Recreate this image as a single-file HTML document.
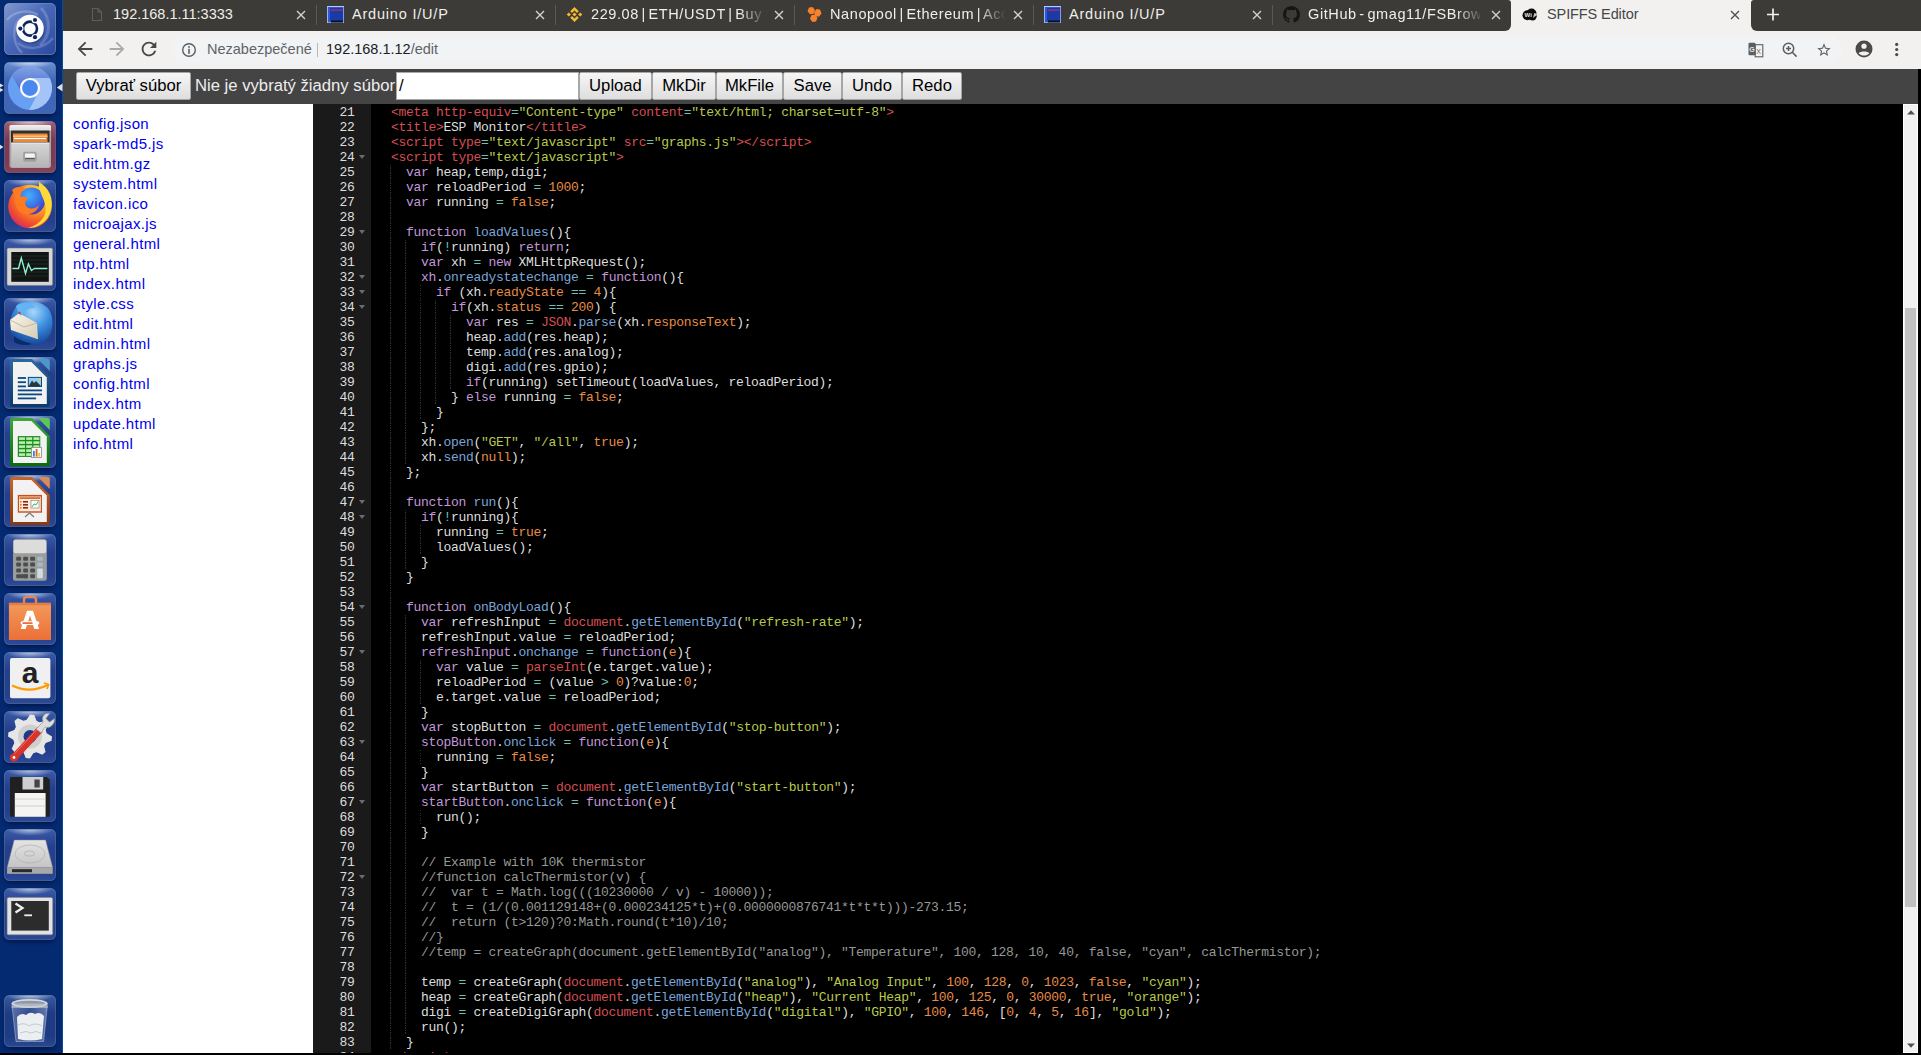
<!DOCTYPE html>
<html><head><meta charset="utf-8"><title>SPIFFS Editor</title>
<style>
html,body{margin:0;padding:0;width:1921px;height:1055px;overflow:hidden;background:#000;position:relative}
*{box-sizing:border-box}
div,svg{position:absolute;display:block}
.sans{font-family:"Liberation Sans",sans-serif}
#tabbar{left:0;top:0;width:1921px;height:31px;background:#3c3b37;}
.tab{top:0;height:31px;white-space:pre;font-family:"Liberation Sans",sans-serif;font-size:14.5px;color:#efeee9;line-height:29px}
.tsep{top:5px;width:1px;height:20px;background:#5a5955}
#toolbar{left:0;top:31px;width:1921px;height:38px;background:#f2f1f0;}
#omni{left:171px;top:36px;width:1671px;height:27px;border-radius:14px;background:#f1f3f4}
#hdr{left:63px;top:69px;width:1855px;height:35px;background:#444;font-family:"Liberation Sans",sans-serif;font-size:16.67px;}
#tree{left:63px;top:104px;width:250px;height:951px;background:#fff;font-family:"Liberation Sans",sans-serif;font-size:15px;}
.fi{left:10px;color:#0000ee;white-space:pre;line-height:20px;letter-spacing:0.4px}
#gutter{left:313px;top:104px;width:58px;height:951px;background:#1a1a1a;overflow:hidden;font-family:"Liberation Mono",monospace;font-size:13px;color:#dedede}
.gn{left:0;width:41.5px;text-align:right;line-height:15px;letter-spacing:-0.3px;white-space:pre}
.fw{left:46px;width:0;height:0;border-left:3.5px solid transparent;border-right:3.5px solid transparent;border-top:4px solid #6b6b6b}
#code{left:371px;top:104px;width:1547px;height:951px;background:#000;overflow:hidden;font-family:"Liberation Mono",monospace;font-size:13px;color:#dedede}
.ln{left:5px;line-height:15px;white-space:pre;letter-spacing:-0.3px}
.ln i{font-style:normal}
i.k{color:#c397d8} i.o{color:#70c0b1} i.n{color:#e78c45} i.s{color:#b9ca4a} i.f{color:#7aa6da} i.v{color:#d54e53} i.c{color:#969896}
.ig{width:1px;background:repeating-linear-gradient(to bottom,#2e2e2e 0,#2e2e2e 1.25px,transparent 1.25px,transparent 2.5px)}
#sb{left:1903px;top:104px;width:15px;height:949px;background:#f1f1f1;border:1px solid #fff}
#thumb{left:1px;top:203px;width:11px;height:599px;background:#c1c1c1}
#bottom{left:0;top:1053px;width:1921px;height:2px;background:#000;z-index:5}
.btn{top:3px;height:28px;border:1px solid #a6a6a6;border-radius:2px;background:linear-gradient(#f6f6f6,#dedede);color:#000;line-height:25px;text-align:center;white-space:pre}
#launcher{left:0;top:0;width:63px;height:1055px;background:#042a72;}
.tile{left:4px;width:52px;height:52px;border-radius:5px;overflow:hidden}
</style></head><body>
<div id="tabbar"></div>
<svg style="left:91px;top:7px" width="12" height="15" viewBox="0 0 12 15"><path d="M1.5 1.5H7L10.5 5V13.5H1.5Z M7 1.5V5H10.5" fill="none" stroke="#5f5e5a" stroke-width="1.1"/></svg>
<div class="tab" style="left:113px;letter-spacing:0">192.168.1.11:3333</div>
<svg style="left:296.0px;top:10px" width="10" height="10" viewBox="0 0 10 10"><path d="M1 1L9 9M9 1L1 9" stroke="#d3d2cd" stroke-width="1.35"/></svg>
<div class="tsep" style="left:316px"></div>
<svg style="left:327px;top:6px" width="17" height="17" viewBox="0 0 17 17"><rect x="0" y="0" width="17" height="17" fill="#b8c8f0"/><rect x="0.8" y="1" width="15.6" height="15.4" fill="#2a5ad8"/><rect x="3" y="2" width="13" height="13" fill="#1a3aa8"/><rect x="3.5" y="3.5" width="12" height="1.2" fill="#c03050"/><rect x="4" y="14.5" width="12" height="2" fill="#111"/></svg>
<div class="tab" style="left:352px;letter-spacing:0.8px">Arduino I/U/P</div>
<svg style="left:535.0px;top:10px" width="10" height="10" viewBox="0 0 10 10"><path d="M1 1L9 9M9 1L1 9" stroke="#d3d2cd" stroke-width="1.35"/></svg>
<div class="tsep" style="left:555px"></div>
<svg style="left:566px;top:6px" width="17" height="17" viewBox="0 0 17 17"><g fill="#f3ba2f"><path d="M8.5 1L12.8 5.3 11 7.1 8.5 4.6 6 7.1 4.2 5.3Z"/><path d="M8.5 16L12.8 11.7 11 9.9 8.5 12.4 6 9.9 4.2 11.7Z"/><rect x="7" y="7" width="3" height="3" transform="rotate(45 8.5 8.5)"/><rect x="1.3" y="7" width="3" height="3" transform="rotate(45 2.8 8.5)"/><rect x="12.7" y="7" width="3" height="3" transform="rotate(45 14.2 8.5)"/></g></svg>
<div class="tab" style="left:591px;letter-spacing:0.6px;word-spacing:-2px;width:176px;overflow:hidden;-webkit-mask-image:linear-gradient(to right,#000 148px,transparent 176px)">229.08 | ETH/USDT | Buy ETH</div>
<svg style="left:774.0px;top:10px" width="10" height="10" viewBox="0 0 10 10"><path d="M1 1L9 9M9 1L1 9" stroke="#d3d2cd" stroke-width="1.35"/></svg>
<div class="tsep" style="left:794px"></div>
<svg style="left:805px;top:6px" width="17" height="17" viewBox="0 0 17 17"><g fill="#f7822a"><path d="M4 1.5L7.5 1 10 4 8.5 7.8 5 8.3 2.5 5.3Z"/><path d="M11.5 3L15 3.5 16.5 7.5 14 10.8 10.5 10.3 9 6.5Z"/><path d="M6.5 9L10 8.6 12.5 11.8 11 15.5 7.5 16 5 12.8Z"/></g></svg>
<div class="tab" style="left:830px;letter-spacing:0.6px;word-spacing:-2px;width:176px;overflow:hidden;-webkit-mask-image:linear-gradient(to right,#000 148px,transparent 176px)">Nanopool | Ethereum | Account</div>
<svg style="left:1013.0px;top:10px" width="10" height="10" viewBox="0 0 10 10"><path d="M1 1L9 9M9 1L1 9" stroke="#d3d2cd" stroke-width="1.35"/></svg>
<div class="tsep" style="left:1033px"></div>
<svg style="left:1044px;top:6px" width="17" height="17" viewBox="0 0 17 17"><rect x="0" y="0" width="17" height="17" fill="#b8c8f0"/><rect x="0.8" y="1" width="15.6" height="15.4" fill="#2a5ad8"/><rect x="3" y="2" width="13" height="13" fill="#1a3aa8"/><rect x="3.5" y="3.5" width="12" height="1.2" fill="#c03050"/><rect x="4" y="14.5" width="12" height="2" fill="#111"/></svg>
<div class="tab" style="left:1069px;letter-spacing:0.8px">Arduino I/U/P</div>
<svg style="left:1252.0px;top:10px" width="10" height="10" viewBox="0 0 10 10"><path d="M1 1L9 9M9 1L1 9" stroke="#d3d2cd" stroke-width="1.35"/></svg>
<div class="tsep" style="left:1272px"></div>
<svg style="left:1283px;top:6px" width="17" height="17" viewBox="0 0 16 16"><path fill="#161616" d="M8 0C3.58 0 0 3.58 0 8c0 3.54 2.29 6.53 5.47 7.59.4.07.55-.17.55-.38 0-.19-.01-.82-.01-1.49-2.01.37-2.53-.49-2.69-.94-.09-.23-.48-.94-.82-1.13-.28-.15-.68-.52-.01-.53.63-.01 1.08.58 1.23.82.72 1.21 1.87.87 2.33.66.07-.52.28-.87.51-1.07-1.78-.2-3.64-.89-3.64-3.95 0-.87.31-1.59.82-2.15-.08-.2-.36-1.02.08-2.12 0 0 .67-.21 2.2.82.64-.18 1.32-.27 2-.27.68 0 1.36.09 2 .27 1.53-1.04 2.2-.82 2.2-.82.44 1.1.16 1.92.08 2.12.51.56.82 1.27.82 2.15 0 3.07-1.87 3.75-3.65 3.95.29.25.54.73.54 1.48 0 1.07-.01 1.93-.01 2.2 0 .21.15.46.55.38A8.013 8.013 0 0016 8c0-4.42-3.58-8-8-8z"/></svg>
<div class="tab" style="left:1308px;letter-spacing:0.6px;word-spacing:-2px;width:176px;overflow:hidden;-webkit-mask-image:linear-gradient(to right,#000 148px,transparent 176px)">GitHub - gmag11/FSBrowser</div>
<svg style="left:1491.0px;top:10px" width="10" height="10" viewBox="0 0 10 10"><path d="M1 1L9 9M9 1L1 9" stroke="#d3d2cd" stroke-width="1.35"/></svg>
<div style="left:1505px;top:0;width:252px;height:31px;background:#f2f1f0"></div>
<div style="left:1480px;top:0;width:31px;height:31px;background:#3c3b37;border-radius:0 3px 6px 0"></div>
<div style="left:1751px;top:0;width:40px;height:31px;background:#3c3b37;border-radius:3px 0 0 6px"></div>
<svg style="left:1491.0px;top:10px" width="10" height="10" viewBox="0 0 10 10"><path d="M1 1L9 9M9 1L1 9" stroke="#d3d2cd" stroke-width="1.35"/></svg>
<svg style="left:1522px;top:8px" width="17" height="13" viewBox="0 0 17 13"><circle cx="5.5" cy="7.2" r="5" fill="#0b0b0b"/><circle cx="9.5" cy="5.5" r="5" fill="#0b0b0b"/><circle cx="10.5" cy="8.2" r="4.2" fill="#0b0b0b"/><text x="2.6" y="8.8" font-family="Liberation Sans" font-weight="bold" font-size="6" fill="#e6e6e6">Wi</text><path d="M11 10L12.3 5 15.8 6.2Z" fill="#c8c8c8"/></svg>
<div class="tab" style="left:1547px;color:#464646;letter-spacing:-0.1px">SPIFFS Editor</div>
<svg style="left:1730.0px;top:10px" width="10" height="10" viewBox="0 0 10 10"><path d="M1 1L9 9M9 1L1 9" stroke="#505050" stroke-width="1.35"/></svg>
<svg style="left:1766px;top:8px" width="14" height="13" viewBox="0 0 14 13"><path d="M7 0.5V12.5M1 6.5H13" stroke="#f2f1ec" stroke-width="1.7"/></svg>
<div id="toolbar"></div>
<div id="omni"></div>
<svg style="left:74px;top:38px" width="22" height="22" viewBox="0 0 24 24"><path d="M20 11H7.83l5.59-5.59L12 4l-8 8 8 8 1.41-1.41L7.83 13H20v-2z" fill="#474747"/></svg>
<svg style="left:106px;top:38px" width="22" height="22" viewBox="0 0 24 24"><path d="M4 11h12.17l-5.59-5.59L12 4l8 8-8 8-1.41-1.41L16.17 13H4v-2z" fill="#a9a9a9"/></svg>
<svg style="left:138px;top:38px" width="22" height="22" viewBox="0 0 24 24"><path d="M17.65 6.35C16.2 4.9 14.21 4 12 4c-4.42 0-7.99 3.58-7.99 8s3.57 8 7.99 8c3.73 0 6.84-2.55 7.73-6h-2.08c-.82 2.33-3.04 4-5.65 4-3.31 0-6-2.69-6-6s2.69-6 6-6c1.66 0 3.14.69 4.22 1.78L13 11h7V4l-2.35 2.35z" fill="#474747"/></svg>
<svg style="left:181px;top:42px" width="16" height="16" viewBox="0 0 16 16"><circle cx="8" cy="8" r="6.3" fill="none" stroke="#5b5e62" stroke-width="1.4"/><rect x="7.2" y="6.8" width="1.6" height="5" fill="#5b5e62"/><rect x="7.2" y="4.2" width="1.6" height="1.6" fill="#5b5e62"/></svg>
<div class="sans" style="left:207px;top:40px;font-size:14.5px;color:#5f6368;white-space:pre;line-height:18px">Nezabezpečené</div>
<div style="left:317px;top:43px;width:1px;height:14px;background:#b5b7b9"></div>
<div class="sans" style="left:326px;top:40px;font-size:14.5px;color:#202124;white-space:pre;line-height:18px">192.168.1.12<span style="color:#5f6368">/edit</span></div>
<svg style="left:1748px;top:42px" width="16" height="16" viewBox="0 0 16 16"><rect x="0.5" y="0.8" width="7" height="12.4" rx="1" fill="#5b5e62"/><rect x="7.2" y="2.7" width="7.6" height="12.1" fill="none" stroke="#5b5e62" stroke-width="1.1"/><text x="1.2" y="9.6" font-family="Liberation Sans" font-size="7" font-weight="bold" fill="#e8e8e8">G</text><text x="8.3" y="11.6" font-family="Liberation Sans" font-size="7" fill="#5b5e62">X</text></svg>
<svg style="left:1781px;top:41px" width="17" height="17" viewBox="0 0 17 17"><circle cx="7.5" cy="7.5" r="5.2" fill="none" stroke="#5b5e62" stroke-width="1.5"/><path d="M11.3 11.3L15.6 15.6M7.5 5V10M5 7.5H10" stroke="#5b5e62" stroke-width="1.5"/></svg>
<svg style="left:1816px;top:42px" width="16" height="16" viewBox="0 0 24 24"><path d="M22 9.24l-7.19-.62L12 2 9.19 8.63 2 9.24l5.46 4.73L5.82 21 12 17.27 18.18 21l-1.63-7.03L22 9.24zM12 15.4l-3.76 2.27 1-4.28-3.32-2.88 4.38-.38L12 6.1l1.71 4.04 4.38.38-3.32 2.88 1 4.28L12 15.4z" fill="#5b5e62"/></svg>
<svg style="left:1855px;top:40px" width="18" height="18" viewBox="0 0 18 18"><circle cx="9" cy="9" r="8.5" fill="#4a4a4a"/><circle cx="9" cy="6.2" r="2.6" fill="#f2f1f0"/><path d="M3.6 13.2C5 11 13 11 14.4 13.2 13 14.9 11 15.6 9 15.6 7 15.6 5 14.9 3.6 13.2Z" fill="#f2f1f0"/></svg>
<svg style="left:1894px;top:42px" width="6" height="15" viewBox="0 0 6 15"><circle cx="2.7" cy="2.4" r="1.6" fill="#4a4a4a"/><circle cx="2.7" cy="7.5" r="1.6" fill="#4a4a4a"/><circle cx="2.7" cy="12.6" r="1.6" fill="#4a4a4a"/></svg>
<div id="hdr">
  <div class="btn" style="left:13px;width:115px">Vybrať súbor</div>
  <div style="left:132px;top:5px;color:#eee;white-space:pre;line-height:24px">Nie je vybratý žiadny súbor</div>
  <div style="left:333px;top:3px;width:183px;height:28px;background:#fff;border:1px solid #a9a9a9;color:#000;line-height:25px;padding-left:2px">/</div>
  <div class="btn" style="left:516px;width:73px">Upload</div>
  <div class="btn" style="left:589px;width:64px">MkDir</div>
  <div class="btn" style="left:653px;width:67px">MkFile</div>
  <div class="btn" style="left:720px;width:59px">Save</div>
  <div class="btn" style="left:779px;width:60px">Undo</div>
  <div class="btn" style="left:839px;width:60px">Redo</div>
</div>
<div id="tree"><div class="fi" style="top:10px">config.json</div><div class="fi" style="top:30px">spark-md5.js</div><div class="fi" style="top:50px">edit.htm.gz</div><div class="fi" style="top:70px">system.html</div><div class="fi" style="top:90px">favicon.ico</div><div class="fi" style="top:110px">microajax.js</div><div class="fi" style="top:130px">general.html</div><div class="fi" style="top:150px">ntp.html</div><div class="fi" style="top:170px">index.html</div><div class="fi" style="top:190px">style.css</div><div class="fi" style="top:210px">edit.html</div><div class="fi" style="top:230px">admin.html</div><div class="fi" style="top:250px">graphs.js</div><div class="fi" style="top:270px">config.html</div><div class="fi" style="top:290px">index.htm</div><div class="fi" style="top:310px">update.html</div><div class="fi" style="top:330px">info.html</div></div>
<div id="gutter"><div class="gn" style="top:1px">21</div><div class="gn" style="top:16px">22</div><div class="gn" style="top:31px">23</div><div class="gn" style="top:46px">24</div><div class="fw" style="top:50.5px"></div><div class="gn" style="top:61px">25</div><div class="gn" style="top:76px">26</div><div class="gn" style="top:91px">27</div><div class="gn" style="top:106px">28</div><div class="gn" style="top:121px">29</div><div class="fw" style="top:125.5px"></div><div class="gn" style="top:136px">30</div><div class="gn" style="top:151px">31</div><div class="gn" style="top:166px">32</div><div class="fw" style="top:170.5px"></div><div class="gn" style="top:181px">33</div><div class="fw" style="top:185.5px"></div><div class="gn" style="top:196px">34</div><div class="fw" style="top:200.5px"></div><div class="gn" style="top:211px">35</div><div class="gn" style="top:226px">36</div><div class="gn" style="top:241px">37</div><div class="gn" style="top:256px">38</div><div class="gn" style="top:271px">39</div><div class="gn" style="top:286px">40</div><div class="gn" style="top:301px">41</div><div class="gn" style="top:316px">42</div><div class="gn" style="top:331px">43</div><div class="gn" style="top:346px">44</div><div class="gn" style="top:361px">45</div><div class="gn" style="top:376px">46</div><div class="gn" style="top:391px">47</div><div class="fw" style="top:395.5px"></div><div class="gn" style="top:406px">48</div><div class="fw" style="top:410.5px"></div><div class="gn" style="top:421px">49</div><div class="gn" style="top:436px">50</div><div class="gn" style="top:451px">51</div><div class="gn" style="top:466px">52</div><div class="gn" style="top:481px">53</div><div class="gn" style="top:496px">54</div><div class="fw" style="top:500.5px"></div><div class="gn" style="top:511px">55</div><div class="gn" style="top:526px">56</div><div class="gn" style="top:541px">57</div><div class="fw" style="top:545.5px"></div><div class="gn" style="top:556px">58</div><div class="gn" style="top:571px">59</div><div class="gn" style="top:586px">60</div><div class="gn" style="top:601px">61</div><div class="gn" style="top:616px">62</div><div class="gn" style="top:631px">63</div><div class="fw" style="top:635.5px"></div><div class="gn" style="top:646px">64</div><div class="gn" style="top:661px">65</div><div class="gn" style="top:676px">66</div><div class="gn" style="top:691px">67</div><div class="fw" style="top:695.5px"></div><div class="gn" style="top:706px">68</div><div class="gn" style="top:721px">69</div><div class="gn" style="top:736px">70</div><div class="gn" style="top:751px">71</div><div class="gn" style="top:766px">72</div><div class="fw" style="top:770.5px"></div><div class="gn" style="top:781px">73</div><div class="gn" style="top:796px">74</div><div class="gn" style="top:811px">75</div><div class="gn" style="top:826px">76</div><div class="gn" style="top:841px">77</div><div class="gn" style="top:856px">78</div><div class="gn" style="top:871px">79</div><div class="gn" style="top:886px">80</div><div class="gn" style="top:901px">81</div><div class="gn" style="top:916px">82</div><div class="gn" style="top:931px">83</div><div class="gn" style="top:946px">84</div></div>
<div id="code"><div class="ig" style="left:19px;top:61px;height:885px"></div><div class="ig" style="left:34px;top:136px;height:225px"></div><div class="ig" style="left:34px;top:406px;height:60px"></div><div class="ig" style="left:34px;top:511px;height:420px"></div><div class="ig" style="left:49px;top:181px;height:135px"></div><div class="ig" style="left:49px;top:421px;height:30px"></div><div class="ig" style="left:49px;top:556px;height:45px"></div><div class="ig" style="left:49px;top:646px;height:15px"></div><div class="ig" style="left:49px;top:706px;height:15px"></div><div class="ig" style="left:64px;top:196px;height:105px"></div><div class="ig" style="left:79px;top:211px;height:75px"></div><div class="ln" style="top:1px">  <i class="v">&lt;meta</i> <i class="v">http-equiv</i><i class="o">=</i><i class="s">&quot;Content-type&quot;</i> <i class="v">content</i><i class="o">=</i><i class="s">&quot;text/html; charset=utf-8&quot;</i><i class="v">&gt;</i></div>
<div class="ln" style="top:16px">  <i class="v">&lt;title&gt;</i>ESP Monitor<i class="v">&lt;/title&gt;</i></div>
<div class="ln" style="top:31px">  <i class="v">&lt;script</i> <i class="v">type</i><i class="o">=</i><i class="s">&quot;text/javascript&quot;</i> <i class="v">src</i><i class="o">=</i><i class="s">&quot;graphs.js&quot;</i><i class="v">&gt;&lt;/script&gt;</i></div>
<div class="ln" style="top:46px">  <i class="v">&lt;script</i> <i class="v">type</i><i class="o">=</i><i class="s">&quot;text/javascript&quot;</i><i class="v">&gt;</i></div>
<div class="ln" style="top:61px">    <i class="k">var</i> heap,temp,digi;</div>
<div class="ln" style="top:76px">    <i class="k">var</i> reloadPeriod <i class="o">=</i> <i class="n">1000</i>;</div>
<div class="ln" style="top:91px">    <i class="k">var</i> running <i class="o">=</i> <i class="n">false</i>;</div>
<div class="ln" style="top:106px"></div>
<div class="ln" style="top:121px">    <i class="k">function</i> <i class="f">loadValues</i>(){</div>
<div class="ln" style="top:136px">      <i class="k">if</i>(<i class="o">!</i>running) <i class="k">return</i>;</div>
<div class="ln" style="top:151px">      <i class="k">var</i> xh <i class="o">=</i> <i class="k">new</i> XMLHttpRequest();</div>
<div class="ln" style="top:166px">      <i class="k">xh</i>.<i class="f">onreadystatechange</i> <i class="o">=</i> <i class="k">function</i>(){</div>
<div class="ln" style="top:181px">        <i class="k">if</i> (xh.<i class="n">readyState</i> <i class="o">==</i> <i class="n">4</i>){</div>
<div class="ln" style="top:196px">          <i class="k">if</i>(xh.<i class="n">status</i> <i class="o">==</i> <i class="n">200</i>) {</div>
<div class="ln" style="top:211px">            <i class="k">var</i> res <i class="o">=</i> <i class="v">JSON</i>.<i class="f">parse</i>(xh.<i class="n">responseText</i>);</div>
<div class="ln" style="top:226px">            heap.<i class="f">add</i>(res.heap);</div>
<div class="ln" style="top:241px">            temp.<i class="f">add</i>(res.analog);</div>
<div class="ln" style="top:256px">            digi.<i class="f">add</i>(res.gpio);</div>
<div class="ln" style="top:271px">            <i class="k">if</i>(running) setTimeout(loadValues, reloadPeriod);</div>
<div class="ln" style="top:286px">          } <i class="k">else</i> running <i class="o">=</i> <i class="n">false</i>;</div>
<div class="ln" style="top:301px">        }</div>
<div class="ln" style="top:316px">      };</div>
<div class="ln" style="top:331px">      xh.<i class="f">open</i>(<i class="s">&quot;GET&quot;</i>, <i class="s">&quot;/all&quot;</i>, <i class="n">true</i>);</div>
<div class="ln" style="top:346px">      xh.<i class="f">send</i>(<i class="n">null</i>);</div>
<div class="ln" style="top:361px">    };</div>
<div class="ln" style="top:376px"></div>
<div class="ln" style="top:391px">    <i class="k">function</i> <i class="f">run</i>(){</div>
<div class="ln" style="top:406px">      <i class="k">if</i>(<i class="o">!</i>running){</div>
<div class="ln" style="top:421px">        running <i class="o">=</i> <i class="n">true</i>;</div>
<div class="ln" style="top:436px">        loadValues();</div>
<div class="ln" style="top:451px">      }</div>
<div class="ln" style="top:466px">    }</div>
<div class="ln" style="top:481px"></div>
<div class="ln" style="top:496px">    <i class="k">function</i> <i class="f">onBodyLoad</i>(){</div>
<div class="ln" style="top:511px">      <i class="k">var</i> refreshInput <i class="o">=</i> <i class="v">document</i>.<i class="f">getElementById</i>(<i class="s">&quot;refresh-rate&quot;</i>);</div>
<div class="ln" style="top:526px">      refreshInput.value <i class="o">=</i> reloadPeriod;</div>
<div class="ln" style="top:541px">      <i class="k">refreshInput</i>.<i class="f">onchange</i> <i class="o">=</i> <i class="k">function</i>(<i class="n">e</i>){</div>
<div class="ln" style="top:556px">        <i class="k">var</i> value <i class="o">=</i> <i class="v">parseInt</i>(e.target.value);</div>
<div class="ln" style="top:571px">        reloadPeriod <i class="o">=</i> (value <i class="o">&gt;</i> <i class="n">0</i>)?value:<i class="n">0</i>;</div>
<div class="ln" style="top:586px">        e.target.value <i class="o">=</i> reloadPeriod;</div>
<div class="ln" style="top:601px">      }</div>
<div class="ln" style="top:616px">      <i class="k">var</i> stopButton <i class="o">=</i> <i class="v">document</i>.<i class="f">getElementById</i>(<i class="s">&quot;stop-button&quot;</i>);</div>
<div class="ln" style="top:631px">      <i class="k">stopButton</i>.<i class="f">onclick</i> <i class="o">=</i> <i class="k">function</i>(<i class="n">e</i>){</div>
<div class="ln" style="top:646px">        running <i class="o">=</i> <i class="n">false</i>;</div>
<div class="ln" style="top:661px">      }</div>
<div class="ln" style="top:676px">      <i class="k">var</i> startButton <i class="o">=</i> <i class="v">document</i>.<i class="f">getElementById</i>(<i class="s">&quot;start-button&quot;</i>);</div>
<div class="ln" style="top:691px">      <i class="k">startButton</i>.<i class="f">onclick</i> <i class="o">=</i> <i class="k">function</i>(<i class="n">e</i>){</div>
<div class="ln" style="top:706px">        run();</div>
<div class="ln" style="top:721px">      }</div>
<div class="ln" style="top:736px"></div>
<div class="ln" style="top:751px">      <i class="c">// Example with 10K thermistor</i></div>
<div class="ln" style="top:766px">      <i class="c">//function calcThermistor(v) {</i></div>
<div class="ln" style="top:781px">      <i class="c">//  var t = Math.log(((10230000 / v) - 10000));</i></div>
<div class="ln" style="top:796px">      <i class="c">//  t = (1/(0.001129148+(0.000234125*t)+(0.0000000876741*t*t*t)))-273.15;</i></div>
<div class="ln" style="top:811px">      <i class="c">//  return (t&gt;120)?0:Math.round(t*10)/10;</i></div>
<div class="ln" style="top:826px">      <i class="c">//}</i></div>
<div class="ln" style="top:841px">      <i class="c">//temp = createGraph(document.getElementById(&quot;analog&quot;), &quot;Temperature&quot;, 100, 128, 10, 40, false, &quot;cyan&quot;, calcThermistor);</i></div>
<div class="ln" style="top:856px"></div>
<div class="ln" style="top:871px">      temp <i class="o">=</i> createGraph(<i class="v">document</i>.<i class="f">getElementById</i>(<i class="s">&quot;analog&quot;</i>), <i class="s">&quot;Analog Input&quot;</i>, <i class="n">100</i>, <i class="n">128</i>, <i class="n">0</i>, <i class="n">1023</i>, <i class="n">false</i>, <i class="s">&quot;cyan&quot;</i>);</div>
<div class="ln" style="top:886px">      heap <i class="o">=</i> createGraph(<i class="v">document</i>.<i class="f">getElementById</i>(<i class="s">&quot;heap&quot;</i>), <i class="s">&quot;Current Heap&quot;</i>, <i class="n">100</i>, <i class="n">125</i>, <i class="n">0</i>, <i class="n">30000</i>, <i class="n">true</i>, <i class="s">&quot;orange&quot;</i>);</div>
<div class="ln" style="top:901px">      digi <i class="o">=</i> createDigiGraph(<i class="v">document</i>.<i class="f">getElementById</i>(<i class="s">&quot;digital&quot;</i>), <i class="s">&quot;GPIO&quot;</i>, <i class="n">100</i>, <i class="n">146</i>, [<i class="n">0</i>, <i class="n">4</i>, <i class="n">5</i>, <i class="n">16</i>], <i class="s">&quot;gold&quot;</i>);</div>
<div class="ln" style="top:916px">      run();</div>
<div class="ln" style="top:931px">    }</div>
<div class="ln" style="top:946px">  <i class="v">&lt;/script&gt;</i></div></div>
<div id="sb"><div id="thumb"></div><svg style="left:3px;top:5px" width="8" height="5" viewBox="0 0 8 5"><path d="M0 4.5L4 0.3 8 4.5Z" fill="#505050"/></svg><svg style="left:3px;top:938px" width="8" height="5" viewBox="0 0 8 5"><path d="M0 0.5L4 4.7 8 0.5Z" fill="#505050"/></svg></div>
<div id="bottom"></div>
<div id="launcher"><div style="left:62px;top:0;width:1px;height:1055px;background:#0e4a94"></div>
<div style="left:5px;top:4px;width:50px;height:50px;border-radius:5px;box-shadow:0 3px 4px rgba(0,8,40,0.55)"></div>
<svg style="left:4px;top:3px" width="52" height="52" viewBox="0 0 52 52"><defs><linearGradient id="ubg" x1="0" y1="0" x2="1" y2="1"><stop offset="0" stop-color="#8098d0"/><stop offset="0.45" stop-color="#4a68b8"/><stop offset="1" stop-color="#2a4aa0"/></linearGradient></defs><rect x="0.5" y="0.5" width="51" height="51" rx="4.5" fill="url(#ubg)" stroke="#fff" stroke-opacity="0.3"/><path d="M3 17C10 8 24 6 34 12" stroke="#fff" stroke-opacity="0.22" stroke-width="2.5" fill="none"/><path d="M37 5C48 16 46 34 36 42" stroke="#fff" stroke-opacity="0.18" stroke-width="3" fill="none"/><path d="M49 35C40 46 24 48 14 40" stroke="#fff" stroke-opacity="0.18" stroke-width="2.5" fill="none"/><path d="M18 50C8 40 8 24 16 16" stroke="#fff" stroke-opacity="0.2" stroke-width="2.5" fill="none"/><circle cx="26.3" cy="26.8" r="14.2" fill="#000" fill-opacity="0.22"/><circle cx="26" cy="25.6" r="13.8" fill="#fdfdfd"/><circle cx="26" cy="25.6" r="7" fill="none" stroke="#0c2460" stroke-width="2.6"/><g fill="#fdfdfd"><circle cx="31" cy="17" r="3.3"/><circle cx="16.3" cy="25.6" r="3.3"/><circle cx="31" cy="34.2" r="3.3"/></g><g fill="#0c2460"><circle cx="31" cy="17" r="2.1"/><circle cx="16.3" cy="25.6" r="2.1"/><circle cx="31" cy="34.2" r="2.1"/></g></svg>
<div style="left:5px;top:63px;width:50px;height:50px;border-radius:5px;box-shadow:0 3px 4px rgba(0,8,40,0.55)"></div>
<svg style="left:4px;top:62px" width="52" height="52" viewBox="0 0 52 52"><defs><linearGradient id="tg1" x1="0" y1="0" x2="0" y2="1"><stop offset="0" stop-color="#6a8ed0"/><stop offset="0.35" stop-color="#3f66b8"/><stop offset="0.8" stop-color="#3f66b8"/><stop offset="1" stop-color="#4066b4"/></linearGradient><radialGradient id="tr1" cx="26" cy="0" r="24" gradientUnits="userSpaceOnUse" gradientTransform="matrix(1 0 0 0.28 0 0)"><stop offset="0" stop-color="#fff" stop-opacity="0.7"/><stop offset="1" stop-color="#fff" stop-opacity="0"/></radialGradient></defs><rect x="0.5" y="0.5" width="51" height="51" rx="4.5" fill="url(#tg1)" stroke="#ffffff" stroke-opacity="0.2"/><rect x="0.5" y="0.5" width="51" height="51" rx="4.5" fill="url(#tr1)"/><defs><clipPath id="cc"><circle cx="26" cy="26" r="22"/></clipPath><linearGradient id="ct" x1="0" y1="0" x2="0" y2="1"><stop offset="0" stop-color="#9ab8ee"/><stop offset="1" stop-color="#4468cc"/></linearGradient></defs><g clip-path="url(#cc)"><rect x="0" y="0" width="52" height="52" fill="#67a0f2"/><path d="M17.4 30L2.5 4.5 2.5 -5 55 -5 55 15.9 26 15.9Z" fill="url(#ct)"/><path d="M26 15.9L55 15.9 55 56 21 56 33.5 32Z" fill="#a4c3f7"/></g><circle cx="26" cy="26" r="9" fill="#4a88f0" stroke="#fbfaf5" stroke-width="2.2"/></svg>
<div style="left:5px;top:122px;width:50px;height:50px;border-radius:5px;box-shadow:0 3px 4px rgba(0,8,40,0.55)"></div>
<svg style="left:4px;top:121px" width="52" height="52" viewBox="0 0 52 52"><defs><linearGradient id="tg2" x1="0" y1="0" x2="0" y2="1"><stop offset="0" stop-color="#a06070"/><stop offset="0.35" stop-color="#7e3a52"/><stop offset="0.8" stop-color="#7e3a52"/><stop offset="1" stop-color="#8a4458"/></linearGradient><radialGradient id="tr2" cx="26" cy="0" r="24" gradientUnits="userSpaceOnUse" gradientTransform="matrix(1 0 0 0.28 0 0)"><stop offset="0" stop-color="#fff" stop-opacity="0.7"/><stop offset="1" stop-color="#fff" stop-opacity="0"/></radialGradient></defs><rect x="0.5" y="0.5" width="51" height="51" rx="4.5" fill="url(#tg2)" stroke="#ffffff" stroke-opacity="0.2"/><rect x="0.5" y="0.5" width="51" height="51" rx="4.5" fill="url(#tr2)"/><defs><linearGradient id="fb" x1="0" y1="0" x2="0" y2="1"><stop offset="0" stop-color="#d6d6d6"/><stop offset="1" stop-color="#b4b4b4"/></linearGradient><linearGradient id="fl" x1="0" y1="0" x2="0" y2="1"><stop offset="0" stop-color="#f2f2f2"/><stop offset="1" stop-color="#d8d8d8"/></linearGradient></defs><rect x="5.5" y="4" width="41.5" height="42.7" rx="2" fill="#a8a8a8"/><rect x="5.5" y="4" width="41.5" height="6" rx="1.5" fill="url(#fl)"/><rect x="7" y="9.5" width="38.5" height="12" fill="#303030"/><rect x="9" y="12.5" width="34.5" height="8.5" fill="#e8883a"/><rect x="9" y="14.5" width="34.5" height="1.6" fill="#f8c080"/><rect x="10" y="17" width="32" height="1.1" fill="#fff"/><rect x="7.3" y="21.8" width="37.9" height="24.9" rx="1" fill="url(#fb)"/><rect x="7.3" y="21.8" width="37.9" height="1.2" fill="#e6e6e6"/><rect x="19.1" y="30.7" width="13.6" height="10.1" rx="2" fill="#a0a0a0"/><rect x="21" y="32.5" width="9.8" height="5.8" rx="1" fill="#f4f4f4"/><rect x="21" y="36.8" width="9.8" height="1.5" fill="#555"/></svg>
<div style="left:5px;top:181px;width:50px;height:50px;border-radius:5px;box-shadow:0 3px 4px rgba(0,8,40,0.55)"></div>
<svg style="left:4px;top:180px" width="52" height="52" viewBox="0 0 52 52"><defs><linearGradient id="tg3" x1="0" y1="0" x2="0" y2="1"><stop offset="0" stop-color="#3a5aa8"/><stop offset="0.35" stop-color="#243f8c"/><stop offset="0.8" stop-color="#243f8c"/><stop offset="1" stop-color="#2c4a98"/></linearGradient><radialGradient id="tr3" cx="26" cy="0" r="24" gradientUnits="userSpaceOnUse" gradientTransform="matrix(1 0 0 0.28 0 0)"><stop offset="0" stop-color="#fff" stop-opacity="0.7"/><stop offset="1" stop-color="#fff" stop-opacity="0"/></radialGradient></defs><rect x="0.5" y="0.5" width="51" height="51" rx="4.5" fill="url(#tg3)" stroke="#ffffff" stroke-opacity="0.2"/><rect x="0.5" y="0.5" width="51" height="51" rx="4.5" fill="url(#tr3)"/><defs><radialGradient id="ff1" cx="0.7" cy="0.2" r="0.9"><stop offset="0" stop-color="#ffe040"/><stop offset="0.45" stop-color="#ff9a20"/><stop offset="0.8" stop-color="#f04a30"/><stop offset="1" stop-color="#d02870"/></radialGradient><radialGradient id="ff2" cx="0.4" cy="0.3" r="0.8"><stop offset="0" stop-color="#40b0ff"/><stop offset="0.6" stop-color="#3a68e0"/><stop offset="1" stop-color="#4a2ab0"/></radialGradient></defs><circle cx="26" cy="26.5" r="21.8" fill="url(#ff1)"/><circle cx="27.5" cy="21" r="13.5" fill="url(#ff2)"/><path d="M35 2C45 8 50 18 47 30 44 42 34 48 24 48 38 44 44 34 41 24 39 16 34 10 35 2Z" fill="#ffd93a"/><path d="M8 10C12 6 18 6 22 8 18 10 16 13 17 17 19 16 22 16 24 19 21 21 20 24 23 27 27 30 33 28 35 25 33 33 25 36 18 33 12 30 10 22 12 16 10 14 9 12 8 10Z" fill="#ff7a20"/></svg>
<div style="left:5px;top:240px;width:50px;height:50px;border-radius:5px;box-shadow:0 3px 4px rgba(0,8,40,0.55)"></div>
<svg style="left:4px;top:239px" width="52" height="52" viewBox="0 0 52 52"><defs><linearGradient id="tg4" x1="0" y1="0" x2="0" y2="1"><stop offset="0" stop-color="#3a5aa8"/><stop offset="0.35" stop-color="#243f8c"/><stop offset="0.8" stop-color="#243f8c"/><stop offset="1" stop-color="#2c4a98"/></linearGradient><radialGradient id="tr4" cx="26" cy="0" r="24" gradientUnits="userSpaceOnUse" gradientTransform="matrix(1 0 0 0.28 0 0)"><stop offset="0" stop-color="#fff" stop-opacity="0.7"/><stop offset="1" stop-color="#fff" stop-opacity="0"/></radialGradient></defs><rect x="0.5" y="0.5" width="51" height="51" rx="4.5" fill="url(#tg4)" stroke="#ffffff" stroke-opacity="0.2"/><rect x="0.5" y="0.5" width="51" height="51" rx="4.5" fill="url(#tr4)"/><rect x="3" y="9" width="45.7" height="37.4" rx="1.5" fill="#d6d6d6" stroke="#777" stroke-width="0.6"/><rect x="7.3" y="13" width="37.5" height="29.8" fill="#101412"/><g stroke="#2a3a34" stroke-width="0.6"><path d="M7.3 17H44.8M7.3 21H44.8M7.3 25H44.8M7.3 33H44.8M7.3 37H44.8"/></g><path d="M8.4 29.5H14.5L17.3 19 21.5 34.5 24.4 25 27.4 31.5 30.4 29.5H43.4" fill="none" stroke="#8ff0d0" stroke-width="1.4"/></svg>
<div style="left:5px;top:299px;width:50px;height:50px;border-radius:5px;box-shadow:0 3px 4px rgba(0,8,40,0.55)"></div>
<svg style="left:4px;top:298px" width="52" height="52" viewBox="0 0 52 52"><defs><linearGradient id="tg5" x1="0" y1="0" x2="0" y2="1"><stop offset="0" stop-color="#3a5aa8"/><stop offset="0.35" stop-color="#243f8c"/><stop offset="0.8" stop-color="#243f8c"/><stop offset="1" stop-color="#2c4a98"/></linearGradient><radialGradient id="tr5" cx="26" cy="0" r="24" gradientUnits="userSpaceOnUse" gradientTransform="matrix(1 0 0 0.28 0 0)"><stop offset="0" stop-color="#fff" stop-opacity="0.7"/><stop offset="1" stop-color="#fff" stop-opacity="0"/></radialGradient></defs><rect x="0.5" y="0.5" width="51" height="51" rx="4.5" fill="url(#tg5)" stroke="#ffffff" stroke-opacity="0.2"/><rect x="0.5" y="0.5" width="51" height="51" rx="4.5" fill="url(#tr5)"/><defs><radialGradient id="tb" cx="0.55" cy="0.25" r="0.8"><stop offset="0" stop-color="#a8d8fa"/><stop offset="0.45" stop-color="#3f92e2"/><stop offset="1" stop-color="#0f3c8c"/></radialGradient><linearGradient id="te" x1="0" y1="0" x2="1" y2="1"><stop offset="0" stop-color="#fbf6ea"/><stop offset="1" stop-color="#d6ccb4"/></linearGradient></defs><path d="M14 6C22 1 36 2 44 10 50 18 50 32 44 40 38 47 30 48 24 47 16 46 10 42 7 36 4 28 6 16 14 6Z" fill="url(#tb)"/><path d="M10 44C14 47 22 48 28 46 22 44 14 42 10 38Z" fill="#0a2a6a"/><path d="M6 22L15 15.2 33 25 34 41.3 7 32Z" fill="url(#te)"/><path d="M6 22L20 29 33 25" fill="none" stroke="#b8ad94" stroke-width="0.8"/><path d="M12 8C18 3 28 4 32 10 26 9 20 12 17 18 15 16 13 12 12 8Z" fill="#62b4f2"/><circle cx="15.5" cy="15" r="1.2" fill="#e03020"/></svg>
<div style="left:5px;top:358px;width:50px;height:50px;border-radius:5px;box-shadow:0 3px 4px rgba(0,8,40,0.55)"></div>
<svg style="left:4px;top:357px" width="52" height="52" viewBox="0 0 52 52"><defs><linearGradient id="tg6" x1="0" y1="0" x2="0" y2="1"><stop offset="0" stop-color="#3a5aa8"/><stop offset="0.35" stop-color="#243f8c"/><stop offset="0.8" stop-color="#243f8c"/><stop offset="1" stop-color="#2c4a98"/></linearGradient><radialGradient id="tr6" cx="26" cy="0" r="24" gradientUnits="userSpaceOnUse" gradientTransform="matrix(1 0 0 0.28 0 0)"><stop offset="0" stop-color="#fff" stop-opacity="0.7"/><stop offset="1" stop-color="#fff" stop-opacity="0"/></radialGradient></defs><rect x="0.5" y="0.5" width="51" height="51" rx="4.5" fill="url(#tg6)" stroke="#ffffff" stroke-opacity="0.2"/><rect x="0.5" y="0.5" width="51" height="51" rx="4.5" fill="url(#tr6)"/><defs><linearGradient id="lb2a6a9a" x1="0" y1="0" x2="0" y2="1"><stop offset="0" stop-color="#2a6a9a"/><stop offset="1" stop-color="#0a3a68"/></linearGradient></defs><path d="M6 4.1Q6 2.1 8 2.1H28L45.8 20V48.1Q45.8 50.1 43.8 50.1H8Q6 50.1 6 48.1Z" fill="url(#lb2a6a9a)"/><path d="M33.9 2.1H43.8Q45.8 2.1 45.8 4.1V14Z" fill="#4a9ac8"/><path d="M9 5H27.4L42.8 20.5V47H9Z" fill="#f2f2f2"/><g fill="#0b4a80"><rect x="13.8" y="20.1" width="8.2" height="1.8"/><rect x="13.8" y="24.3" width="8.2" height="1.8"/><rect x="13.8" y="28.5" width="8.2" height="1.8"/><rect x="13.8" y="32.5" width="24.2" height="1.8"/><rect x="13.8" y="36.5" width="24.2" height="1.8"/><rect x="13.8" y="40.5" width="18.3" height="1.8"/><rect x="23.8" y="19.9" width="14.2" height="10.1"/></g><rect x="24.8" y="20.9" width="12.2" height="8.1" fill="#8ad0f8"/><path d="M24.8 29L28 23.5 30 26 32 24 37 29Z" fill="#333"/><circle cx="35.5" cy="22.5" r="1.2" fill="#f8c840"/></svg>
<div style="left:5px;top:417px;width:50px;height:50px;border-radius:5px;box-shadow:0 3px 4px rgba(0,8,40,0.55)"></div>
<svg style="left:4px;top:416px" width="52" height="52" viewBox="0 0 52 52"><defs><linearGradient id="tg7" x1="0" y1="0" x2="0" y2="1"><stop offset="0" stop-color="#3a5aa8"/><stop offset="0.35" stop-color="#243f8c"/><stop offset="0.8" stop-color="#243f8c"/><stop offset="1" stop-color="#2c4a98"/></linearGradient><radialGradient id="tr7" cx="26" cy="0" r="24" gradientUnits="userSpaceOnUse" gradientTransform="matrix(1 0 0 0.28 0 0)"><stop offset="0" stop-color="#fff" stop-opacity="0.7"/><stop offset="1" stop-color="#fff" stop-opacity="0"/></radialGradient></defs><rect x="0.5" y="0.5" width="51" height="51" rx="4.5" fill="url(#tg7)" stroke="#ffffff" stroke-opacity="0.2"/><rect x="0.5" y="0.5" width="51" height="51" rx="4.5" fill="url(#tr7)"/><defs><linearGradient id="lb3aaa3a" x1="0" y1="0" x2="0" y2="1"><stop offset="0" stop-color="#3aaa3a"/><stop offset="1" stop-color="#0a6a0a"/></linearGradient></defs><path d="M6 4.1Q6 2.1 8 2.1H28L45.8 20V48.1Q45.8 50.1 43.8 50.1H8Q6 50.1 6 48.1Z" fill="url(#lb3aaa3a)"/><path d="M33.9 2.1H43.8Q45.8 2.1 45.8 4.1V14Z" fill="#5ac85a"/><path d="M9 5H27.4L42.8 20.5V47H9Z" fill="#f2f2f2"/><rect x="13.8" y="20.1" width="22.5" height="20.8" fill="#1c8a1c"/><rect x="15.0" y="21.3" width="6" height="2.6" fill="#b8f0b0"/><rect x="15.0" y="25.3" width="6" height="2.6" fill="#b8f0b0"/><rect x="15.0" y="29.3" width="6" height="2.6" fill="#b8f0b0"/><rect x="15.0" y="33.3" width="6" height="2.6" fill="#b8f0b0"/><rect x="15.0" y="37.3" width="6" height="2.6" fill="#b8f0b0"/><rect x="22.2" y="21.3" width="6" height="2.6" fill="#b8f0b0"/><rect x="22.2" y="25.3" width="6" height="2.6" fill="#b8f0b0"/><rect x="22.2" y="29.3" width="6" height="2.6" fill="#b8f0b0"/><rect x="22.2" y="33.3" width="6" height="2.6" fill="#b8f0b0"/><rect x="22.2" y="37.3" width="6" height="2.6" fill="#b8f0b0"/><rect x="29.4" y="21.3" width="6" height="2.6" fill="#b8f0b0"/><rect x="29.4" y="25.3" width="6" height="2.6" fill="#b8f0b0"/><rect x="29.4" y="29.3" width="6" height="2.6" fill="#b8f0b0"/><rect x="29.4" y="33.3" width="6" height="2.6" fill="#b8f0b0"/><rect x="29.4" y="37.3" width="6" height="2.6" fill="#b8f0b0"/><rect x="27.4" y="31.4" width="10.1" height="10" fill="#fafafa" stroke="#888" stroke-width="0.8"/><rect x="29" y="35" width="1.8" height="5.6" fill="#2a8ae0"/><rect x="31.7" y="33" width="1.8" height="7.6" fill="#e8601a"/><rect x="34.3" y="37" width="1.8" height="3.6" fill="#f0c020"/></svg>
<div style="left:5px;top:476px;width:50px;height:50px;border-radius:5px;box-shadow:0 3px 4px rgba(0,8,40,0.55)"></div>
<svg style="left:4px;top:475px" width="52" height="52" viewBox="0 0 52 52"><defs><linearGradient id="tg8" x1="0" y1="0" x2="0" y2="1"><stop offset="0" stop-color="#3a5aa8"/><stop offset="0.35" stop-color="#243f8c"/><stop offset="0.8" stop-color="#243f8c"/><stop offset="1" stop-color="#2c4a98"/></linearGradient><radialGradient id="tr8" cx="26" cy="0" r="24" gradientUnits="userSpaceOnUse" gradientTransform="matrix(1 0 0 0.28 0 0)"><stop offset="0" stop-color="#fff" stop-opacity="0.7"/><stop offset="1" stop-color="#fff" stop-opacity="0"/></radialGradient></defs><rect x="0.5" y="0.5" width="51" height="51" rx="4.5" fill="url(#tg8)" stroke="#ffffff" stroke-opacity="0.2"/><rect x="0.5" y="0.5" width="51" height="51" rx="4.5" fill="url(#tr8)"/><defs><linearGradient id="lbc8662a" x1="0" y1="0" x2="0" y2="1"><stop offset="0" stop-color="#c8662a"/><stop offset="1" stop-color="#8a3a10"/></linearGradient></defs><path d="M6 4.1Q6 2.1 8 2.1H28L45.8 20V48.1Q45.8 50.1 43.8 50.1H8Q6 50.1 6 48.1Z" fill="url(#lbc8662a)"/><path d="M33.9 2.1H43.8Q45.8 2.1 45.8 4.1V14Z" fill="#d88a5a"/><path d="M9 5H27.4L42.8 20.5V47H9Z" fill="#f2f2f2"/><rect x="13.8" y="19.9" width="24.2" height="17.8" fill="#c8501a"/><rect x="15" y="21.5" width="21.8" height="14.8" fill="#fbe8dc"/><rect x="15.5" y="22.3" width="20.5" height="1.6" fill="#d0601a"/><g fill="#e07a3a"><rect x="16" y="26" width="1.6" height="1.6"/><rect x="16" y="29" width="1.6" height="1.6"/><rect x="16" y="32" width="1.6" height="1.6"/></g><g fill="#8a2a08"><rect x="19" y="26" width="5" height="1.6"/><rect x="19" y="29" width="5" height="1.6"/><rect x="19" y="32" width="5" height="1.6"/></g><rect x="27" y="25.5" width="8" height="7.5" fill="#fff" stroke="#888" stroke-width="0.7"/><path d="M28 32L30 29 32 30 34 26.5" stroke="#30b030" stroke-width="0.9" fill="none"/><path d="M25.5 38L21 42M25.5 38L30 42" stroke="#777" stroke-width="1.1"/></svg>
<div style="left:5px;top:535px;width:50px;height:50px;border-radius:5px;box-shadow:0 3px 4px rgba(0,8,40,0.55)"></div>
<svg style="left:4px;top:534px" width="52" height="52" viewBox="0 0 52 52"><defs><linearGradient id="tg9" x1="0" y1="0" x2="0" y2="1"><stop offset="0" stop-color="#3a5aa8"/><stop offset="0.35" stop-color="#243f8c"/><stop offset="0.8" stop-color="#243f8c"/><stop offset="1" stop-color="#2c4a98"/></linearGradient><radialGradient id="tr9" cx="26" cy="0" r="24" gradientUnits="userSpaceOnUse" gradientTransform="matrix(1 0 0 0.28 0 0)"><stop offset="0" stop-color="#fff" stop-opacity="0.7"/><stop offset="1" stop-color="#fff" stop-opacity="0"/></radialGradient></defs><rect x="0.5" y="0.5" width="51" height="51" rx="4.5" fill="url(#tg9)" stroke="#ffffff" stroke-opacity="0.2"/><rect x="0.5" y="0.5" width="51" height="51" rx="4.5" fill="url(#tr9)"/><rect x="9" y="5.3" width="33.8" height="41.5" rx="2.5" fill="#9c9c9c"/><rect x="9.6" y="5.8" width="32.6" height="13.5" rx="2" fill="#dcdcda"/><rect x="12.2" y="22.8" width="4.8" height="4" rx="1" fill="#4a4f4c"/><rect x="19.2" y="22.8" width="4.8" height="4" rx="1" fill="#4a4f4c"/><rect x="26.2" y="22.8" width="4.8" height="4" rx="1" fill="#4a4f4c"/><rect x="12.2" y="28.6" width="4.8" height="4" rx="1" fill="#4a4f4c"/><rect x="19.2" y="28.6" width="4.8" height="4" rx="1" fill="#4a4f4c"/><rect x="26.2" y="28.6" width="4.8" height="4" rx="1" fill="#4a4f4c"/><rect x="12.2" y="34.4" width="4.8" height="4" rx="1" fill="#4a4f4c"/><rect x="19.2" y="34.4" width="4.8" height="4" rx="1" fill="#4a4f4c"/><rect x="26.2" y="34.4" width="4.8" height="4" rx="1" fill="#4a4f4c"/><rect x="19.2" y="40.2" width="4.8" height="4" rx="1" fill="#4a4f4c"/><rect x="26.2" y="40.2" width="4.8" height="4" rx="1" fill="#4a4f4c"/><rect x="12.2" y="40.2" width="11.8" height="4" rx="1" fill="#4a4f4c"/><rect x="33.2" y="22.8" width="5.6" height="4" rx="1" fill="#a8bac4"/><rect x="33.2" y="28.6" width="5.6" height="4" rx="1" fill="#a8bac4"/><rect x="33.2" y="34.4" width="5.6" height="9.8" rx="1" fill="#cfdce4"/></svg>
<div style="left:5px;top:594px;width:50px;height:50px;border-radius:5px;box-shadow:0 3px 4px rgba(0,8,40,0.55)"></div>
<svg style="left:4px;top:593px" width="52" height="52" viewBox="0 0 52 52"><defs><linearGradient id="tg10" x1="0" y1="0" x2="0" y2="1"><stop offset="0" stop-color="#3a5aa8"/><stop offset="0.35" stop-color="#243f8c"/><stop offset="0.8" stop-color="#243f8c"/><stop offset="1" stop-color="#2c4a98"/></linearGradient><radialGradient id="tr10" cx="26" cy="0" r="24" gradientUnits="userSpaceOnUse" gradientTransform="matrix(1 0 0 0.28 0 0)"><stop offset="0" stop-color="#fff" stop-opacity="0.7"/><stop offset="1" stop-color="#fff" stop-opacity="0"/></radialGradient></defs><rect x="0.5" y="0.5" width="51" height="51" rx="4.5" fill="url(#tg10)" stroke="#ffffff" stroke-opacity="0.2"/><rect x="0.5" y="0.5" width="51" height="51" rx="4.5" fill="url(#tr10)"/><defs><linearGradient id="sw" x1="0" y1="0" x2="0" y2="1"><stop offset="0" stop-color="#f39a5a"/><stop offset="1" stop-color="#ec7038"/></linearGradient></defs><path d="M20 14V7Q20 3.9 23 3.9H29Q32 3.9 32 7V14" fill="none" stroke="#e8845a" stroke-width="2.4"/><rect x="4.9" y="9.8" width="42.1" height="37.2" fill="url(#sw)"/><rect x="4.9" y="9.8" width="42.1" height="2.5" fill="#d86a3a" fill-opacity="0.6"/><path d="M23 17.7H29L35.1 36H30.3L26 22.5 21.6 36H16.7Z" fill="#fff"/><rect x="16.5" y="28.3" width="18.8" height="3.6" rx="1.8" fill="#fff"/><rect x="18.5" y="29.4" width="10" height="1.4" fill="#e04a1a"/></svg>
<div style="left:5px;top:653px;width:50px;height:50px;border-radius:5px;box-shadow:0 3px 4px rgba(0,8,40,0.55)"></div>
<svg style="left:4px;top:652px" width="52" height="52" viewBox="0 0 52 52"><defs><linearGradient id="tg11" x1="0" y1="0" x2="0" y2="1"><stop offset="0" stop-color="#3a5aa8"/><stop offset="0.35" stop-color="#243f8c"/><stop offset="0.8" stop-color="#243f8c"/><stop offset="1" stop-color="#2c4a98"/></linearGradient><radialGradient id="tr11" cx="26" cy="0" r="24" gradientUnits="userSpaceOnUse" gradientTransform="matrix(1 0 0 0.28 0 0)"><stop offset="0" stop-color="#fff" stop-opacity="0.7"/><stop offset="1" stop-color="#fff" stop-opacity="0"/></radialGradient></defs><rect x="0.5" y="0.5" width="51" height="51" rx="4.5" fill="url(#tg11)" stroke="#ffffff" stroke-opacity="0.2"/><rect x="0.5" y="0.5" width="51" height="51" rx="4.5" fill="url(#tr11)"/><rect x="6" y="5.9" width="40.4" height="40.3" rx="2" fill="#f0f0f0"/><text x="26" y="31" text-anchor="middle" font-family="Liberation Sans" font-weight="bold" font-size="30" fill="#222">a</text><path d="M8 33.5Q26 42 43.5 33" fill="none" stroke="#ff9a00" stroke-width="2.4"/><path d="M40 31L44.5 32.5 43 37" fill="none" stroke="#ff9a00" stroke-width="1.8"/></svg>
<div style="left:5px;top:712px;width:50px;height:50px;border-radius:5px;box-shadow:0 3px 4px rgba(0,8,40,0.55)"></div>
<svg style="left:4px;top:711px" width="52" height="52" viewBox="0 0 52 52"><defs><linearGradient id="tg12" x1="0" y1="0" x2="0" y2="1"><stop offset="0" stop-color="#3a5aa8"/><stop offset="0.35" stop-color="#243f8c"/><stop offset="0.8" stop-color="#243f8c"/><stop offset="1" stop-color="#2c4a98"/></linearGradient><radialGradient id="tr12" cx="26" cy="0" r="24" gradientUnits="userSpaceOnUse" gradientTransform="matrix(1 0 0 0.28 0 0)"><stop offset="0" stop-color="#fff" stop-opacity="0.7"/><stop offset="1" stop-color="#fff" stop-opacity="0"/></radialGradient></defs><rect x="0.5" y="0.5" width="51" height="51" rx="4.5" fill="url(#tg12)" stroke="#ffffff" stroke-opacity="0.2"/><rect x="0.5" y="0.5" width="51" height="51" rx="4.5" fill="url(#tr12)"/><path d="M26.00 3.50 L30.29 3.92 L32.51 9.79 L35.44 11.37 L41.56 9.94 L44.29 13.28 L41.71 18.99 L42.67 22.18 L48.00 25.50 L47.58 29.79 L41.71 32.01 L40.13 34.94 L41.56 41.06 L38.22 43.79 L32.51 41.21 L29.32 42.17 L26.00 47.50 L21.71 47.08 L19.49 41.21 L16.56 39.63 L10.44 41.06 L7.71 37.72 L10.29 32.01 L9.33 28.82 L4.00 25.50 L4.42 21.21 L10.29 18.99 L11.87 16.06 L10.44 9.94 L13.78 7.21 L19.49 9.79 L22.68 8.83Z" fill="#e6e6e6"/><circle cx="26" cy="25.5" r="12" fill="#cfcfcf"/><circle cx="26" cy="25.5" r="6.5" fill="#1c3a8a"/><path d="M7.5 44L12.5 49 38.5 21 33.5 16Z" fill="#d8342c"/><path d="M8.5 45L33.8 17.5" stroke="#f07070" stroke-width="1"/><circle cx="10" cy="46.5" r="4" fill="#d8342c"/><circle cx="10" cy="46.5" r="1.4" fill="#fff"/><path d="M32 18L39 11Q37 5 42 2.5L46 2 42 7.5 45.5 11 50.5 7.5Q51 13 46 16 43 17 41 16L37 22Z" fill="#dcdcdc" stroke="#8a8a8a" stroke-width="0.6"/></svg>
<div style="left:5px;top:771px;width:50px;height:50px;border-radius:5px;box-shadow:0 3px 4px rgba(0,8,40,0.55)"></div>
<svg style="left:4px;top:770px" width="52" height="52" viewBox="0 0 52 52"><defs><linearGradient id="tg13" x1="0" y1="0" x2="0" y2="1"><stop offset="0" stop-color="#3a5aa8"/><stop offset="0.35" stop-color="#243f8c"/><stop offset="0.8" stop-color="#243f8c"/><stop offset="1" stop-color="#2c4a98"/></linearGradient><radialGradient id="tr13" cx="26" cy="0" r="24" gradientUnits="userSpaceOnUse" gradientTransform="matrix(1 0 0 0.28 0 0)"><stop offset="0" stop-color="#fff" stop-opacity="0.7"/><stop offset="1" stop-color="#fff" stop-opacity="0"/></radialGradient></defs><rect x="0.5" y="0.5" width="51" height="51" rx="4.5" fill="url(#tg13)" stroke="#ffffff" stroke-opacity="0.2"/><rect x="0.5" y="0.5" width="51" height="51" rx="4.5" fill="url(#tr13)"/><path d="M6 8Q6 7 7 7H43L45.8 9.8V45.8Q45.8 46.8 44.8 46.8H7Q6 46.8 6 45.8Z" fill="#202020"/><rect x="18.5" y="7" width="20.7" height="12.5" fill="#cfcfcf"/><rect x="30.4" y="9.5" width="5.3" height="8" fill="#444"/><rect x="10.8" y="23" width="30.8" height="23.8" fill="#f4f4f2"/><path d="M10.8 29H41.6M10.8 36H41.6" stroke="#b8b8b0" stroke-width="0.6"/></svg>
<div style="left:5px;top:830px;width:50px;height:50px;border-radius:5px;box-shadow:0 3px 4px rgba(0,8,40,0.55)"></div>
<svg style="left:4px;top:829px" width="52" height="52" viewBox="0 0 52 52"><defs><linearGradient id="tg14" x1="0" y1="0" x2="0" y2="1"><stop offset="0" stop-color="#3a5aa8"/><stop offset="0.35" stop-color="#243f8c"/><stop offset="0.8" stop-color="#243f8c"/><stop offset="1" stop-color="#2c4a98"/></linearGradient><radialGradient id="tr14" cx="26" cy="0" r="24" gradientUnits="userSpaceOnUse" gradientTransform="matrix(1 0 0 0.28 0 0)"><stop offset="0" stop-color="#fff" stop-opacity="0.7"/><stop offset="1" stop-color="#fff" stop-opacity="0"/></radialGradient></defs><rect x="0.5" y="0.5" width="51" height="51" rx="4.5" fill="url(#tg14)" stroke="#ffffff" stroke-opacity="0.2"/><rect x="0.5" y="0.5" width="51" height="51" rx="4.5" fill="url(#tr14)"/><defs><linearGradient id="dk" x1="0" y1="0" x2="0" y2="1"><stop offset="0" stop-color="#e4e4e4"/><stop offset="1" stop-color="#c4c4c4"/></linearGradient></defs><path d="M10.2 11H41.6L48.7 38.8H3.1Z" fill="url(#dk)" stroke="#888" stroke-width="0.5"/><rect x="3.1" y="38.8" width="45.6" height="6" fill="#a8a8a8"/><rect x="8" y="40.2" width="20" height="3" fill="#2a2a2a"/><ellipse cx="26" cy="25" rx="15" ry="9" fill="none" stroke="#b0b0b0" stroke-width="0.7"/><ellipse cx="25.5" cy="24.5" rx="5" ry="2.5" fill="none" stroke="#aaa" stroke-width="0.7"/></svg>
<div style="left:5px;top:889px;width:50px;height:50px;border-radius:5px;box-shadow:0 3px 4px rgba(0,8,40,0.55)"></div>
<svg style="left:4px;top:888px" width="52" height="52" viewBox="0 0 52 52"><defs><linearGradient id="tg15" x1="0" y1="0" x2="0" y2="1"><stop offset="0" stop-color="#3a5aa8"/><stop offset="0.35" stop-color="#243f8c"/><stop offset="0.8" stop-color="#243f8c"/><stop offset="1" stop-color="#2c4a98"/></linearGradient><radialGradient id="tr15" cx="26" cy="0" r="24" gradientUnits="userSpaceOnUse" gradientTransform="matrix(1 0 0 0.28 0 0)"><stop offset="0" stop-color="#fff" stop-opacity="0.7"/><stop offset="1" stop-color="#fff" stop-opacity="0"/></radialGradient></defs><rect x="0.5" y="0.5" width="51" height="51" rx="4.5" fill="url(#tg15)" stroke="#ffffff" stroke-opacity="0.2"/><rect x="0.5" y="0.5" width="51" height="51" rx="4.5" fill="url(#tr15)"/><rect x="3.1" y="9.5" width="45.6" height="37.3" rx="1.5" fill="#e2e2e2" stroke="#888" stroke-width="0.6"/><rect x="7.3" y="13" width="37.5" height="29.6" fill="#2c2c2c"/><path d="M11.5 15.5L18.5 20 11.5 24.5" fill="none" stroke="#f0f0f0" stroke-width="2.2"/><rect x="20.3" y="26.4" width="7.7" height="1.8" fill="#f0f0f0"/></svg>
<div style="left:5px;top:996px;width:50px;height:50px;border-radius:5px;box-shadow:0 3px 4px rgba(0,8,40,0.55)"></div>
<svg style="left:4px;top:995px" width="52" height="52" viewBox="0 0 52 52"><defs><linearGradient id="tg16" x1="0" y1="0" x2="0" y2="1"><stop offset="0" stop-color="#3a5aa0"/><stop offset="0.35" stop-color="#1e3c84"/><stop offset="0.8" stop-color="#1e3c84"/><stop offset="1" stop-color="#2a4890"/></linearGradient><radialGradient id="tr16" cx="26" cy="0" r="24" gradientUnits="userSpaceOnUse" gradientTransform="matrix(1 0 0 0.28 0 0)"><stop offset="0" stop-color="#fff" stop-opacity="0.7"/><stop offset="1" stop-color="#fff" stop-opacity="0"/></radialGradient></defs><rect x="0.5" y="0.5" width="51" height="51" rx="4.5" fill="url(#tg16)" stroke="#ffffff" stroke-opacity="0.2"/><rect x="0.5" y="0.5" width="51" height="51" rx="4.5" fill="url(#tr16)"/><defs><linearGradient id="tr" x1="0" y1="0" x2="1" y2="0"><stop offset="0" stop-color="#fff" stop-opacity="0.25"/><stop offset="0.5" stop-color="#fff" stop-opacity="0.08"/><stop offset="1" stop-color="#fff" stop-opacity="0.3"/></linearGradient></defs><path d="M8 11L12 46.5H39.6L43.3 11Z" fill="url(#tr)" stroke="#dfe6ee" stroke-opacity="0.5" stroke-width="0.8"/><path d="M13 22Q17 17 22 20 26 16 31 19 36 16 40 21L38 44Q26 47 14 44Z" fill="#eceff2"/><path d="M14 30Q20 27 25 31 31 27 38 31" fill="none" stroke="#b8c0c8" stroke-width="0.8"/><path d="M16 38Q22 35 27 38 32 35 37 38" fill="none" stroke="#b8c0c8" stroke-width="0.8"/><ellipse cx="25.6" cy="8.5" rx="18" ry="4.5" fill="#d4d8dc"/><ellipse cx="25.6" cy="8.5" rx="15.5" ry="2.7" fill="#8a98a8"/><rect x="7.6" y="8.5" width="36" height="4.5" fill="#c8ccd0" fill-opacity="0.6"/></svg>
<svg style="left:0;top:83px" width="5" height="10" viewBox="0 0 5 10"><path d="M0 0.5L3.5 2.5 0 4.5Z M0 5L3.5 7 0 9Z" fill="#e0e0e0"/></svg>
<svg style="left:56px;top:83px" width="7" height="9" viewBox="0 0 7 9"><path d="M6.5 0.5V8.5L0.8 4.5Z" fill="#e0e0e0"/></svg>
<svg style="left:0;top:144px" width="5" height="6" viewBox="0 0 5 6"><path d="M0 0.8L3.5 3 0 5.2Z" fill="#e0e0e0"/></svg></div>
</body></html>
